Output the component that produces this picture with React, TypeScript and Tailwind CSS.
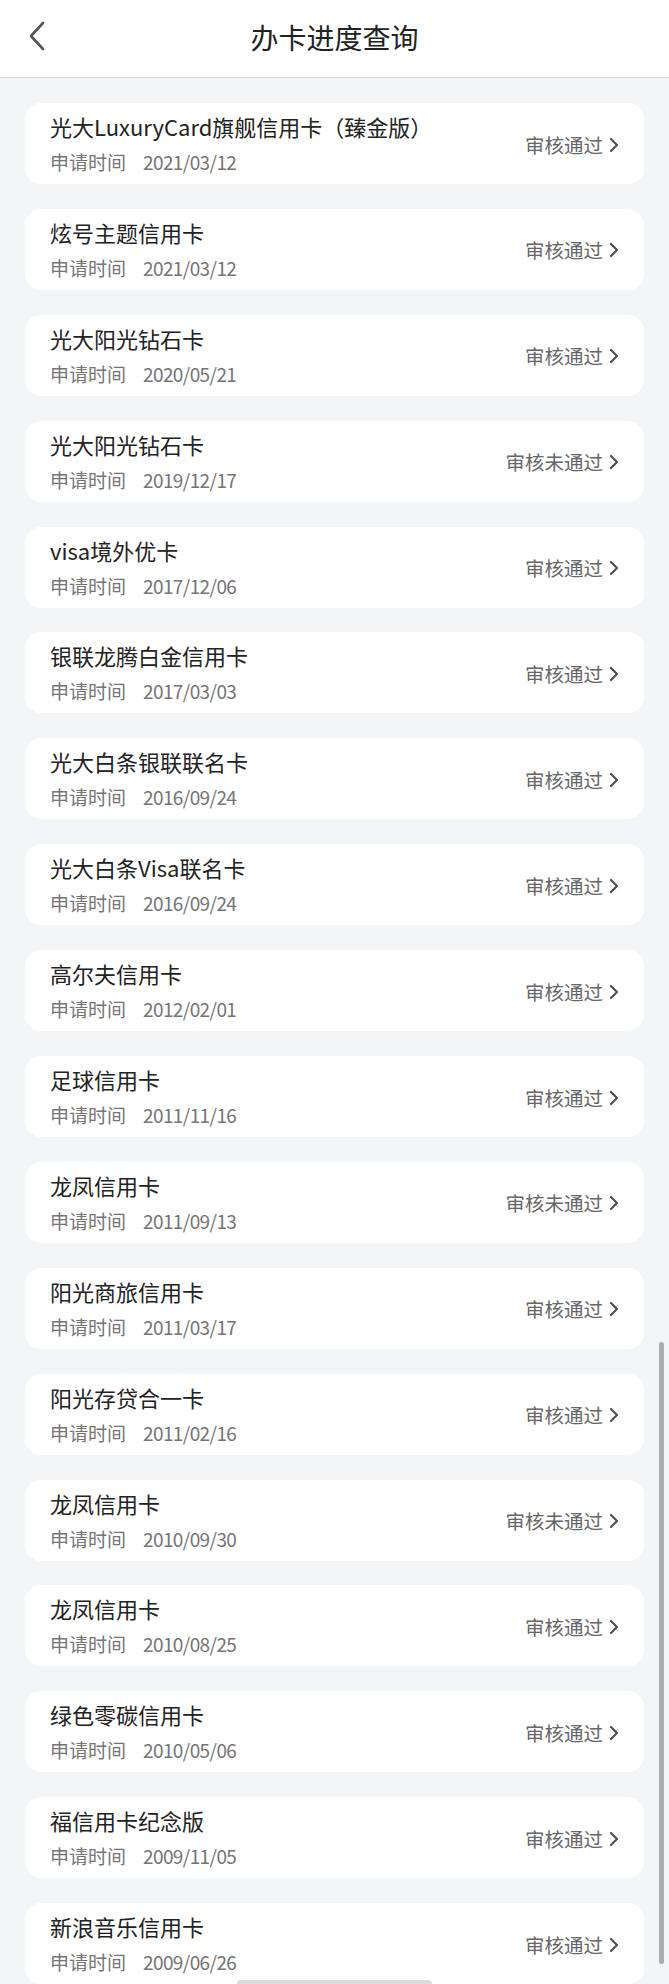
import React from "react";

interface Application {
  name: string;
  date: string;
  passed: boolean;
}

const applications: Application[] = [
  { name: "光大LuxuryCard旗舰信用卡（臻金版）", date: "2021/03/12", passed: true },
  { name: "炫号主题信用卡", date: "2021/03/12", passed: true },
  { name: "光大阳光钻石卡", date: "2020/05/21", passed: true },
  { name: "光大阳光钻石卡", date: "2019/12/17", passed: false },
  { name: "visa境外优卡", date: "2017/12/06", passed: true },
  { name: "银联龙腾白金信用卡", date: "2017/03/03", passed: true },
  { name: "光大白条银联联名卡", date: "2016/09/24", passed: true },
  { name: "光大白条Visa联名卡", date: "2016/09/24", passed: true },
  { name: "高尔夫信用卡", date: "2012/02/01", passed: true },
  { name: "足球信用卡", date: "2011/11/16", passed: true },
  { name: "龙凤信用卡", date: "2011/09/13", passed: false },
  { name: "阳光商旅信用卡", date: "2011/03/17", passed: true },
  { name: "阳光存贷合一卡", date: "2011/02/16", passed: true },
  { name: "龙凤信用卡", date: "2010/09/30", passed: false },
  { name: "龙凤信用卡", date: "2010/08/25", passed: true },
  { name: "绿色零碳信用卡", date: "2010/05/06", passed: true },
  { name: "福信用卡纪念版", date: "2009/11/05", passed: true },
  { name: "新浪音乐信用卡", date: "2009/06/26", passed: true },
];

function BackIcon() {
  return (
    <svg width="18" height="30" viewBox="0 0 18 30" fill="none" stroke="#555" strokeWidth="2.6" strokeLinecap="round" strokeLinejoin="round">
      <polyline points="15,2 3,15 15,28" />
    </svg>
  );
}

function ChevronRight() {
  return (
    <svg width="10" height="16" viewBox="0 0 10 16" fill="none" stroke="#505050" strokeWidth="2.2" strokeLinecap="round" strokeLinejoin="round">
      <polyline points="2,2 8,8 2,14" />
    </svg>
  );
}

export default function App() {
  return (
    <div
      className="relative min-h-[1984px] w-[669px] overflow-hidden bg-[#f4f5f7]"
      style={{ fontFamily: '"Noto Sans CJK SC", "Noto Sans", sans-serif' }}
    >
      {/* ── Header ── */}
      <div className="relative flex h-[78px] items-center justify-center border-b border-[#d6d6d6] bg-white">
        <div className="absolute left-[28px] top-[21px]">
          <BackIcon />
        </div>
        <h1 className="pb-[3px] text-[28px] font-normal leading-none text-[#222]">办卡进度查询</h1>
      </div>

      {/* ── List ── */}
      <div className="flex flex-col gap-[24.9px] px-[25px] pt-[25px]">
        {applications.map((app, i) => (
          <div key={i} className="flex h-[81px] justify-between rounded-[16px] bg-white pl-[25px] pr-[25px]">
            <div className="flex flex-col pt-[9px]">
              <p className="text-[22px] leading-[28px] text-[#222]">{app.name}</p>
              <p className="mt-[11px] flex text-[19px] leading-[22px] text-[#757575]">
                <span>申请时间</span>
                <span className="ml-[17px] tracking-[-0.6px]">{app.date}</span>
              </p>
            </div>
            <div className="flex items-center gap-[6px] pt-[2px]">
              <span className="text-[19.5px] leading-[22px] text-[#666]">
                {app.passed ? "审核通过" : "审核未通过"}
              </span>
              <ChevronRight />
            </div>
          </div>
        ))}
      </div>

      {/* Scroll indicator */}
      <div className="absolute right-[5px] top-[1342px] h-[622px] w-[5px] rounded-full bg-[#ababab]" />

      {/* Home indicator */}
      <div className="absolute bottom-0 left-[237px] h-[4px] w-[195px] rounded-t-full bg-[#dcdcdc]" />
    </div>
  );
}
